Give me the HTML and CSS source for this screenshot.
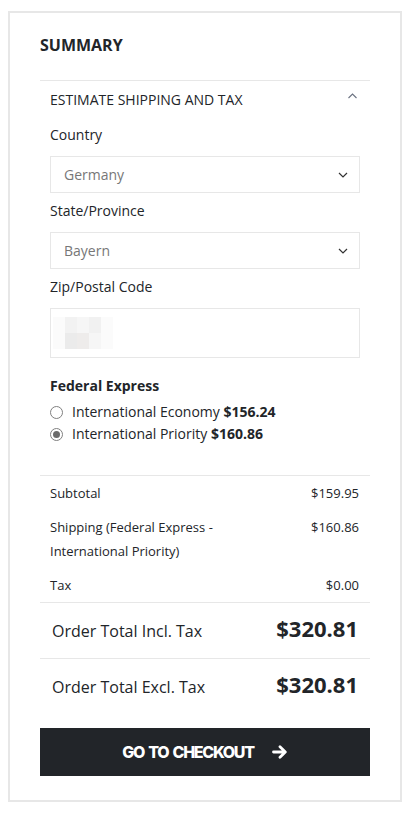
FILE: index.html
```html
<!DOCTYPE html>
<html lang="en">
<head>
<meta charset="utf-8">
<title>Summary</title>
<link rel="stylesheet" href="styles.css">
</head>
<body>
<div class="card">
  <h2 class="title">SUMMARY</h2>

  <section class="estimate">
    <div class="est-head">
      <span>ESTIMATE SHIPPING AND TAX</span>
      <svg class="chev-up" width="9" height="6" viewBox="0 0 9 6"><path d="M0.5 5 L4.5 1 L8.5 5" fill="none" stroke="#6a7180" stroke-width="1.1"/></svg>
    </div>

    <div class="field">
      <div class="label">Country</div>
      <div class="select"><span>Germany</span>
        <svg width="10" height="6" viewBox="0 0 10 6"><path d="M1 1 L5 5 L9 1" fill="none" stroke="#333" stroke-width="1.2"/></svg>
      </div>
    </div>

    <div class="field">
      <div class="label">State/Province</div>
      <div class="select"><span>Bayern</span>
        <svg width="10" height="6" viewBox="0 0 10 6"><path d="M1 1 L5 5 L9 1" fill="none" stroke="#333" stroke-width="1.2"/></svg>
      </div>
    </div>

    <div class="field">
      <div class="label">Zip/Postal Code</div>
      <div class="input">
        <div class="blur">
          <i class="b1"></i><i class="b2"></i><i class="b3"></i><i class="b4"></i><i class="b1"></i>
          <i class="b1"></i><i class="b5"></i><i class="b6"></i><i class="b3"></i><i class="b1"></i>
        </div>
      </div>
    </div>

    <div class="carrier">Federal Express</div>
    <div class="radio"><span class="dot"></span><span>International Economy <b>$156.24</b></span></div>
    <div class="radio"><span class="dot checked"></span><span>International Priority <b>$160.86</b></span></div>
  </section>

  <div class="totals">
    <div class="trow"><span class="tl">Subtotal</span><span class="tv">$159.95</span></div>
    <div class="trow"><span class="tl">Shipping (Federal Express - International Priority)</span><span class="tv">$160.86</span></div>
    <div class="trow"><span class="tl">Tax</span><span class="tv">$0.00</span></div>
  </div>

  <div class="grand">
    <span class="gl">Order Total Incl. Tax</span><span class="gv">$320.81</span>
  </div>
  <div class="grand last">
    <span class="gl">Order Total Excl. Tax</span><span class="gv">$320.81</span>
  </div>

  <button class="checkout">
    <span>GO TO CHECKOUT</span>
    <svg width="16" height="14" viewBox="0 0 16 14"><path d="M1.5 7 H13 M8 1.8 L13.3 7 L8 12.2" fill="none" stroke="#fff" stroke-width="2.8" stroke-linecap="round" stroke-linejoin="round"/></svg>
  </button>
</div>
</body>
</html>
```

FILE: styles.css
```css
* { box-sizing: border-box; }

body {
  margin: 0;
  background: #fff;
  font-family: "Open Sans", "Liberation Sans", sans-serif;
  color: #222529;
}

.card {
  width: 394px;
  margin: 11px 0 0 8px;
  border: 2px solid #e7e7e7;
  padding: 21px 30px 24px;
}

.title {
  margin: 0 0 24px;
  font-size: 16px;
  line-height: 22px;
  font-weight: 700;
}

.estimate {
  border-top: 1px solid #e7e7e7;
  border-bottom: 1px solid #e7e7e7;
  padding: 9px 10px 30px;
  font-size: 14px;
  line-height: 20px;
}

.est-head {
  display: flex;
  justify-content: space-between;
  align-items: flex-start;
  margin-bottom: 15px;
}

.chev-up {
  margin: 3px 3px 0 0;
}

.field {
  margin-bottom: 8px;
}

.label {
  margin-bottom: 11px;
}

.select {
  height: 37px;
  border: 1px solid #e7e7e7;
  display: flex;
  align-items: center;
  justify-content: space-between;
  padding: 0 11px 0 13px;
  color: #777;
}

.input {
  height: 50px;
  border: 1px solid #e7e7e7;
  display: flex;
  align-items: center;
  padding-left: 2px;
}

.blur {
  display: grid;
  grid-template-columns: repeat(5, 12px);
  grid-auto-rows: 16px;
}

.blur i { display: block; }
.b1 { background: #fbfbfb; }
.b2 { background: #f2f2f2; }
.b3 { background: #f6f6f6; }
.b4 { background: #f1f1f1; }
.b5 { background: #ebebeb; }
.b6 { background: #eeeceb; }

.carrier {
  margin-top: 18px;
  font-weight: 700;
  margin-bottom: 5px;
}

.radio {
  display: flex;
  align-items: center;
  gap: 9px;
  line-height: 22px;
}

.radio b { font-weight: 700; }

.dot {
  width: 13px;
  height: 13px;
  border: 1px solid #808080;
  border-radius: 50%;
  display: flex;
  align-items: center;
  justify-content: center;
  flex: none;
}

.dot.checked::after {
  content: "";
  width: 7px;
  height: 7px;
  border-radius: 50%;
  background: #6b6b6b;
}

.totals {
  border-bottom: 1px solid #e7e7e7;
  font-size: 13px;
  line-height: 24px;
}

.trow {
  display: flex;
  justify-content: space-between;
  align-items: flex-start;
  padding: 5px 11px 5px 10px;
}

.tl { width: 200px; }

.grand {
  display: flex;
  justify-content: space-between;
  align-items: baseline;
  padding: 10px 12px 15px;
  border-bottom: 1px solid #e7e7e7;
}

.grand.last {
  border-bottom: 0;
  padding-bottom: 15px;
}

.gl {
  font-size: 16px;
  line-height: 24px;
}

.gv {
  font-size: 22px;
  line-height: 30px;
  font-weight: 700;
}

.checkout {
  margin-top: 14px;
  width: 100%;
  height: 48px;
  border: 0;
  background: #222529;
  color: #fff;
  display: flex;
  align-items: center;
  justify-content: center;
  gap: 18px;
  font-family: Inter, "Liberation Sans", sans-serif;
  font-weight: 800;
  font-size: 16px;
  letter-spacing: -1.3px;
  word-spacing: 2px;
  padding: 0;
}
```
